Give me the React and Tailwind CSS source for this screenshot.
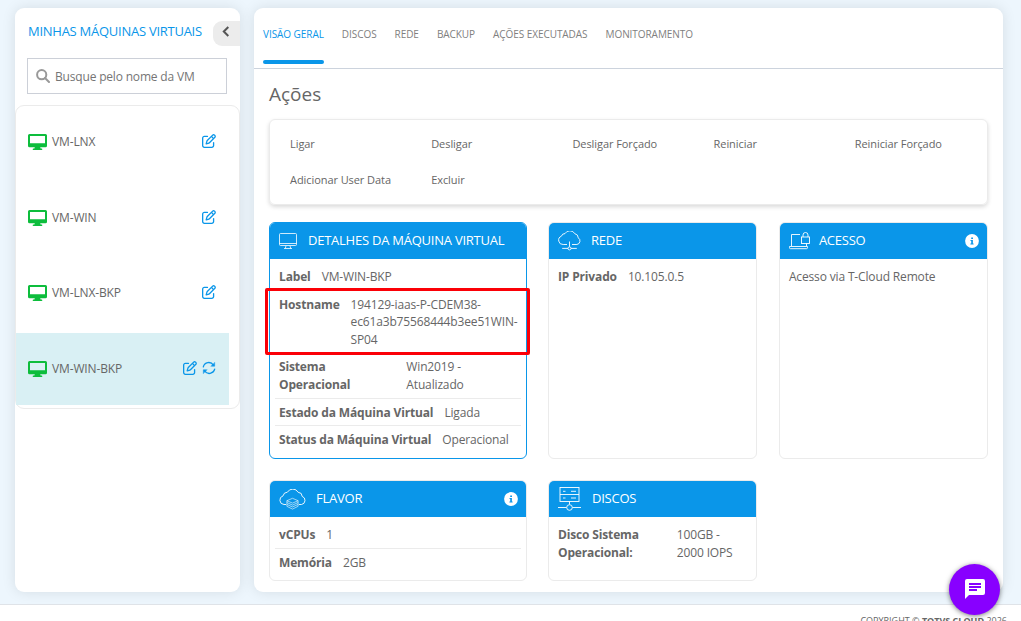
import { FaRegPenToSquare } from "react-icons/fa6";

const machines = [
  { name: "VM-LNX" },
  { name: "VM-WIN" },
  { name: "VM-LNX-BKP" },
  { name: "VM-WIN-BKP", selected: true },
];

const tabs = ["VISÃO GERAL", "DISCOS", "REDE", "BACKUP", "AÇÕES EXECUTADAS", "MONITORAMENTO"];

const actions = [
  "Ligar",
  "Desligar",
  "Desligar Forçado",
  "Reiniciar",
  "Reiniciar Forçado",
  "Adicionar User Data",
  "Excluir",
];

const DesktopIcon = () => (
  <svg width="19" height="16" viewBox="0 0 19 16" fill="#0dbd3c">
    <path
      fillRule="evenodd"
      d="M1.5 0h16A1.5 1.5 0 0 1 19 1.5v10.3a1.5 1.5 0 0 1-1.5 1.5h-5.3l.4 1.2h1a.75.75 0 0 1 0 1.5H5.4a.75.75 0 0 1 0-1.5h1l.4-1.2H1.5A1.5 1.5 0 0 1 0 11.8V1.5A1.5 1.5 0 0 1 1.5 0zM2 2v7.3h15V2z"
    />
  </svg>
);

const SearchIcon = () => (
  <svg width="14" height="14" viewBox="0 0 14 14" fill="none" stroke="#999" strokeWidth="2">
    <circle cx="5.7" cy="5.7" r="4.6" />
    <path d="M9 9l4 4" strokeLinecap="round" />
  </svg>
);

const SyncIcon = () => (
  <svg width="14" height="14" viewBox="0 0 15 15" fill="none" stroke="currentColor" strokeWidth="1.4" strokeLinecap="round">
    <path d="M1.4 6.2A6 6 0 0 1 12.2 4.3" />
    <path d="M13.6 8.8A6 6 0 0 1 2.8 10.7" />
    <path d="M13.6 1.8v3.8H9.8z" fill="currentColor" strokeWidth="0.5" strokeLinejoin="round" />
    <path d="M1.4 13.2V9.4h3.8z" fill="currentColor" strokeWidth="0.5" strokeLinejoin="round" />
  </svg>
);

const MonitorIcon = () => (
  <svg width="18" height="16" viewBox="0 0 18 16" fill="none" stroke="white" strokeWidth="0.8">
    <rect x="0.5" y="0.5" width="17" height="12" rx="1" />
    <path d="M0.5 10.5h17M7 12.8l-.7 2.6M11 12.8l.7 2.6M5 15.5h8" />
  </svg>
);

const CloudNetIcon = () => (
  <svg width="23" height="20" viewBox="0 0 23 20" fill="none" stroke="white" strokeWidth="0.9">
    <path d="M9 13.5H5.2A4.3 4.3 0 0 1 3.4 5.2 3.6 3.6 0 0 1 7 2.6 5.6 5.6 0 0 1 16.8 2.7a4.4 4.4 0 0 1 3.5 4.2 3.6 3.6 0 0 1-1.4 6.6H14" />
    <path d="M11.5 10.5v5.2M4.2 17.4h5.8M13 17.4h5.8" />
    <circle cx="11.5" cy="17.4" r="1.5" />
  </svg>
);

const LaptopLockIcon = () => (
  <svg width="21" height="18" viewBox="0 0 21 18" fill="none" stroke="white" strokeWidth="0.9">
    <path d="M2.5 14V2.5H11M17.5 11.5V14M0.5 14.5h18v1.2a1 1 0 0 1-1 1h-16a1 1 0 0 1-1-1z" />
    <rect x="12.5" y="5" width="8" height="6.5" />
    <path d="M14 5V3a2.5 2.5 0 0 1 5 0v2" />
  </svg>
);

const CloudStackIcon = () => (
  <svg width="27" height="21" viewBox="0 0 27 21" fill="none" stroke="white" strokeWidth="0.9">
    <path d="M7 15.5H5a4.4 4.4 0 0 1-1-8.6A4.6 4.6 0 0 1 8.4 3.2 6.2 6.2 0 0 1 19.2 3.3a4.2 4.2 0 0 1 4 4.1 4.2 4.2 0 0 1-.7 8.1H20" />
    <path
      d="M13.5 9.3l5.6 2.4-5.6 2.4-5.6-2.4zM7.9 11.7v5.6l5.6 2.8 5.6-2.8v-5.6M7.9 13.5l5.6 2.6 5.6-2.6M7.9 15.4l5.6 2.6 5.6-2.6"
      strokeWidth="0.6"
    />
  </svg>
);

const ServerIcon = () => (
  <svg width="23" height="24" viewBox="0 0 23 24" fill="none" stroke="white" strokeWidth="0.9">
    <rect x="2" y="0.5" width="19" height="14" />
    <path d="M2 7.5h19M5 4.3h2.5M13 4.3h5M5 11h2.5M13 11h5M11.5 14.5v3M0 20.5h8.5M14.5 20.5H23" />
    <circle cx="11.5" cy="20.5" r="2.8" />
  </svg>
);

const InfoIcon = () => (
  <svg width="14" height="14" viewBox="0 0 14 14" className="mb-px ml-auto">
    <circle cx="7" cy="7" r="6.9" fill="white" />
    <path d="M6.2 3.4h1.8v1.6H6.2zM5.5 6h2.4v3.4h.7v1.1H5.4V9.4h.8V7.1h-.7z" fill="#0a96e9" />
  </svg>
);

const Card = ({ title, icon, info, active, gap, children }) => (
  <section
    className={`flex flex-col rounded-[6px] border bg-white ${
      active ? "border-[#0a96e9]" : "border-[#ebebeb]"
    }`}
  >
    <header className="flex h-9 shrink-0 items-center rounded-t-[5px] bg-[#0a96e9] pr-2 pl-[9px] text-white">
      {icon}
      <h2 className={`text-[13px] tracking-[-0.24px] whitespace-nowrap ${gap}`}>{title}</h2>
      {info && <InfoIcon />}
    </header>
    <div className="px-[5px] pt-1">{children}</div>
  </section>
);

const Row = ({ label, children, last, gap = "gap-[11px]" }) => (
  <div className={`flex px-1 pt-[5px] pb-1 leading-[17.6px] ${gap} ${last ? "" : "border-b border-[#ebebeb]"}`}>
    <b className="font-bold">{label}</b>
    <span>{children}</span>
  </div>
);

const Sidebar = () => (
  <aside className="h-[584px] w-[225px] shrink-0 rounded-[9px] bg-white shadow-[0_0_14px_rgba(0,0,0,0.1)]">
    <div className="flex items-start justify-between pt-[13px] pl-[13px]">
      <h1 className="text-[13px] leading-[21px] tracking-[-0.26px] text-[#0a96e9]">MINHAS MÁQUINAS VIRTUAIS</h1>
      <button className="flex h-[25px] w-[27px] items-center justify-center rounded-l-[9px] bg-[#ececec] pr-px pb-1">
        <svg width="8" height="11" viewBox="0 0 8 11" fill="none" stroke="#555" strokeWidth="2">
          <path d="M6.3 1L1.8 5.5l4.5 4.5" />
        </svg>
      </button>
    </div>
    <label className="mx-3 mt-3 flex h-9 w-[200px] items-center border border-[#ccd0d8] pl-2">
      <SearchIcon />
      <input
        placeholder="Busque pelo nome da VM"
        className="ml-[5px] w-40 pt-px text-[12px] tracking-[-0.18px] outline-none placeholder:text-[#757575]"
      />
    </label>
    <ul className="mt-[11px] flex h-[304px] flex-col gap-[3.6px] rounded-[9px] border border-[#ebebeb]">
      {machines.map((vm) => (
        <li
          key={vm.name}
          className={`flex h-[72px] w-[213px] shrink-0 items-center pr-[13px] pl-3 ${
            vm.selected ? "bg-[#d9f0f4]" : ""
          }`}
        >
          <DesktopIcon />
          <span className="ml-[5px] text-[12px] tracking-[-0.14px]">{vm.name}</span>
          <div className="mb-[2px] ml-auto flex gap-[5px] text-[#0a96e9]">
            <FaRegPenToSquare className="size-[14px]" />
            {vm.selected && <SyncIcon />}
          </div>
        </li>
      ))}
    </ul>
  </aside>
);

export default function App() {
  return (
    <div className="flex h-[621px] w-[1021px] flex-col overflow-hidden bg-[#edf6fd] font-['Open_Sans',sans-serif] text-[12px] tracking-[-0.15px] text-[#666]">
      <div className="flex h-[604px] shrink-0 gap-[14px] pt-2 pl-[15px]">
        <Sidebar />
        <main className="h-[584px] w-[749px] rounded-[9px] bg-white shadow-[0_0_14px_rgba(0,0,0,0.1)]">
          <nav className="flex h-[61px] items-stretch gap-[18px] border-b border-[#ccd3dd] pl-[9px] text-[10px] tracking-[-0.06px] text-[#808080]">
            {tabs.map((tab, i) => (
              <a
                key={tab}
                className={`relative flex h-14 items-center pb-1 ${i === 0 ? "text-[#0a96e9]" : ""}`}
              >
                {tab}
                {i === 0 && <span className="absolute inset-x-0 bottom-0 h-1 rounded-[2px] bg-[#0a96e9]" />}
              </a>
            ))}
          </nav>
          <div className="px-[15px] pt-[11px]">
            <h2 className="text-[19px] leading-7 tracking-normal">Ações</h2>
            <div className="mt-[11px] grid h-[86px] grid-cols-[repeat(5,141.2px)] grid-rows-[36px_36px] rounded-[6px] border border-[#ebebeb] pt-[6px] pl-5 text-[11px] leading-9 tracking-[-0.07px] shadow-[0_2px_4px_rgba(0,0,0,0.15)]">
              {actions.map((a) => (
                <span key={a}>{a}</span>
              ))}
            </div>
            <div className="mt-[17px] grid grid-cols-[257.5px_209.4px_209px] grid-rows-[237px_101px] gap-x-[21.5px] gap-y-[21px]">
              <Card title="DETALHES DA MÁQUINA VIRTUAL" icon={<MonitorIcon />} gap="ml-[11px]" active>
                <Row label="Label">VM-WIN-BKP</Row>
                <div className="relative">
                  <Row label="Hostname">
                    194129-iaas-P-CDEM38-
                    <br />
                    ec61a3b75568444b3ee51WIN-
                    <br />
                    SP04
                  </Row>
                  <div className="absolute -top-[2.6px] -left-[10px] h-[67px] w-[265px] rounded-[2px] border-3 border-[#fb0007]" />
                </div>
                <Row label={<>Sistema<br />Operacional</>} gap="gap-[56px]">
                  Win2019 -<br />
                  Atualizado
                </Row>
                <Row label="Estado da Máquina Virtual">Ligada</Row>
                <Row label="Status da Máquina Virtual" last>
                  Operacional
                </Row>
              </Card>
              <Card title="REDE" icon={<CloudNetIcon />} gap="ml-[10px]">
                <Row label="IP Privado" last>
                  10.105.0.5
                </Row>
              </Card>
              <Card title="ACESSO" icon={<LaptopLockIcon />} gap="ml-[9px]" info>
                <p className="px-1 pt-[5px] leading-[17.6px]">Acesso via T-Cloud Remote</p>
              </Card>
              <Card title="FLAVOR" icon={<CloudStackIcon />} gap="ml-[10px]" info>
                <Row label="vCPUs">1</Row>
                <Row label="Memória" last>
                  2GB
                </Row>
              </Card>
              <Card title="DISCOS" icon={<ServerIcon />} gap="ml-[11px]">
                <Row label={<>Disco Sistema<br />Operacional:</>} gap="gap-[38px]" last>
                  100GB -<br />
                  2000 IOPS
                </Row>
              </Card>
            </div>
          </div>
        </main>
      </div>
      <footer className="h-[17px] border-t border-[#dfe3e8] bg-white pt-[9px] pr-[14px] text-right text-[9px] leading-[13px] tracking-normal">
        COPYRIGHT © <b>TOTVS CLOUD</b> 2026
      </footer>
      <button className="fixed top-[564px] left-[949px] flex size-[51px] items-center justify-center rounded-full bg-[#8800ff] pb-px shadow-[0_1px_5px_rgba(0,0,0,0.5)]">
        <svg width="20" height="20" viewBox="0 0 20 20">
          <path d="M2 0h16a2 2 0 0 1 2 2v12a2 2 0 0 1-2 2H4l-4 4V2a2 2 0 0 1 2-2z" fill="white" />
          <path d="M4 4h12v2H4zM4 7h12v2H4zM4 10h8v2H4z" fill="#8800ff" />
        </svg>
      </button>
    </div>
  );
}
